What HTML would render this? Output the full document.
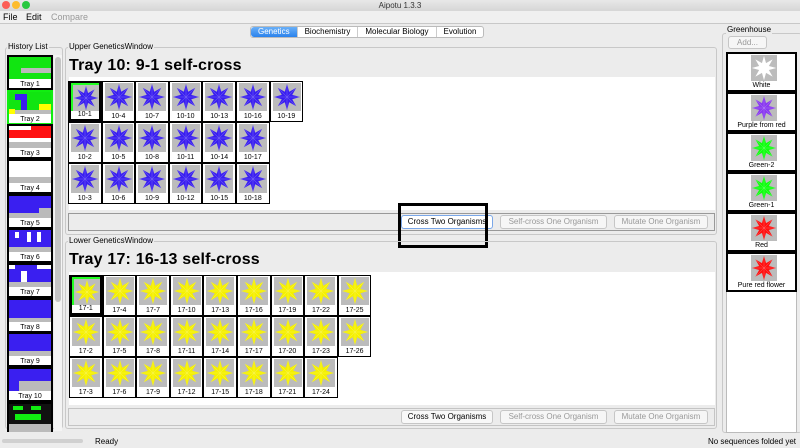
<!DOCTYPE html>
<html><head><meta charset="utf-8"><style>
*{box-sizing:border-box;margin:0;padding:0}
body{width:800px;height:448px;overflow:hidden;background:#ececec;font-family:"Liberation Sans",sans-serif;position:relative;font-size:9px;color:#000}
.abs{position:absolute}
.title{left:0;top:0;width:800px;height:11px;background:linear-gradient(#e8e8e8,#d6d6d6);text-align:center;font-size:8px;line-height:11px;color:#333}
.dot{position:absolute;top:1px;width:8px;height:8px;border-radius:50%}
.menu{left:0;top:11px;width:800px;height:13px;background:#f0f0f0;border-bottom:1px solid #c8c8c8;font-size:9px;line-height:13px}
.menu span{position:absolute}
.tabs{top:26px;left:250px;height:12px;display:flex;border:1px solid #bbb;border-radius:3px;background:#fff;font-size:8px;line-height:10px}
.tabs div{padding:0 7px;border-right:1px solid #ccc}
.tabs .on{background:linear-gradient(#6ab0f8,#2a82ec);color:#fff;border-radius:3px 0 0 3px}
.frame{border:1px solid #c8c8c8;border-radius:3px}
.lbl{font-size:8px;background:#ececec;padding:0 1px}
.grid{display:flex;flex-wrap:wrap}
.c{width:33.6px;height:41px;border:1px solid #000;background:#fff;position:relative;margin-right:0}
.c svg{position:absolute;left:2px;top:1px;width:28px;height:28px;background:#bcbcbc}
.c span,.gh span{position:absolute;left:0;right:0;bottom:1px;text-align:center;font-size:7px;color:#000}
.sel{border:3px solid #000}
.sel svg{left:0;top:-1px;border-top:2px solid #2f2;border-left:2px solid #2f2}
.btn{position:absolute;height:14px;border:1px solid #c6c6c6;border-radius:3px;background:#f6f6f6;font-size:8px;line-height:12px;text-align:center;color:#999}
.btn.a{color:#000;border-color:#7aa7e8;background:#fff}
.hi{position:absolute;left:7px;width:46px;height:35px;border:2px solid #000;background:#fff}
.hi .im{position:absolute;left:0;top:0;width:42px;height:22px;background:#fff;overflow:hidden}
.hi span{position:absolute;left:0;right:0;bottom:0;text-align:center;font-size:7px}
.gh{position:absolute;left:726px;width:71px;height:40px;border:2px solid #000;background:#fff}
.gh svg{position:absolute;left:23px;top:1px;width:26px;height:26px;background:#bcbcbc}
.b{color:#3a1ff0}.y{color:#f5f000}
.h{font-size:16px;font-weight:bold;letter-spacing:0.2px}
</style></head><body>
<svg width="0" height="0" style="position:absolute"><defs><symbol id="f" viewBox="0 0 32 32"><polygon fill="currentColor" points="31,16 22,18.5 26.6,26.6 18.5,22 16,31 13.5,22 5.4,26.6 10,18.5 1,16 10,13.5 5.4,5.4 13.5,10 16,1 18.5,10 26.6,5.4 22,13.5"/><path d="M16 2V30M2 16H30M6 6L26 26M26 6L6 26" stroke="#fff" stroke-opacity=".3" stroke-width=".6"/></symbol></defs></svg>

<div class="abs title">Aipotu 1.3.3
<div class="dot" style="left:2px;background:#fc5f57"></div><div class="dot" style="left:12px;background:#fdbc2e"></div><div class="dot" style="left:22px;background:#28c840"></div></div>
<div class="abs menu"><span style="left:3px">File</span><span style="left:26px">Edit</span><span style="left:51px;color:#999">Compare</span></div>
<div class="abs tabs"><div class="on">Genetics</div><div>Biochemistry</div><div>Molecular Biology</div><div style="border:0">Evolution</div></div>

<!-- History -->
<div class="abs frame" style="left:5px;top:47px;width:58px;height:382px"></div>
<div class="abs lbl" style="left:7px;top:42px">History List</div>
<div class="abs" style="left:54px;top:55px;width:8px;height:376px;background:#f4f4f4"><div style="margin:2px 1px;height:245px;border-radius:3px;background:#c4c4c4"></div></div>
<div class="hi" style="top:55px"><div class="im" style="background:#11e511"><div class="abs" style="left:12px;top:11px;width:30px;height:5px;background:#bbb"></div></div><span>Tray 1</span></div>
<div class="hi" style="top:90px;border-color:#1e1"><div class="im" style="background:#11e511"><div class="abs" style="left:6px;top:2px;width:12px;height:6px;background:#3a1ff0"></div><div class="abs" style="left:12px;top:6px;width:6px;height:12px;background:#3a1ff0"></div><div class="abs" style="left:30px;top:12px;width:12px;height:6px;background:#ff0"></div><div class="abs" style="left:0;top:17px;width:6px;height:5px;background:#ff0"></div><div class="abs" style="left:6px;top:18px;width:36px;height:4px;background:#bbb"></div></div><span>Tray 2</span></div>
<div class="hi" style="top:124px"><div class="im"><div class="abs" style="left:0;top:4px;width:42px;height:8px;background:#f11"></div><div class="abs" style="left:22px;top:0;width:20px;height:6px;background:#f11"></div><div class="abs" style="left:0;top:16px;width:42px;height:6px;background:#bbb"></div></div><span>Tray 3</span></div>
<div class="hi" style="top:159px"><div class="im"><div class="abs" style="left:0;top:16px;width:42px;height:6px;background:#bbb"></div></div><span>Tray 4</span></div>
<div class="hi" style="top:194px"><div class="im" style="background:#3a1ff0"><div class="abs" style="left:30px;top:12px;width:12px;height:10px;background:#bbb"></div><div class="abs" style="left:0;top:17px;width:42px;height:5px;background:#bbb"></div></div><span>Tray 5</span></div>
<div class="hi" style="top:228px"><div class="im" style="background:#3a1ff0"><div class="abs" style="left:6px;top:2px;width:4px;height:6px;background:#fff"></div><div class="abs" style="left:18px;top:2px;width:4px;height:10px;background:#fff"></div><div class="abs" style="left:28px;top:2px;width:4px;height:10px;background:#fff"></div><div class="abs" style="left:0;top:17px;width:42px;height:5px;background:#bbb"></div></div><span>Tray 6</span></div>
<div class="hi" style="top:263px"><div class="im" style="background:#3a1ff0"><div class="abs" style="left:0;top:0;width:6px;height:4px;background:#fff"></div><div class="abs" style="left:12px;top:6px;width:6px;height:12px;background:#fff"></div><div class="abs" style="left:28px;top:0;width:14px;height:4px;background:#fff"></div><div class="abs" style="left:0;top:17px;width:42px;height:5px;background:#bbb"></div></div><span>Tray 7</span></div>
<div class="hi" style="top:298px"><div class="im" style="background:#3a1ff0"><div class="abs" style="left:0;top:18px;width:42px;height:4px;background:#bbb"></div></div><span>Tray 8</span></div>
<div class="hi" style="top:332px"><div class="im" style="background:#3a1ff0"><div class="abs" style="left:0;top:17px;width:42px;height:5px;background:#bbb"></div></div><span>Tray 9</span></div>
<div class="hi" style="top:367px"><div class="im" style="background:#3a1ff0"><div class="abs" style="left:10px;top:12px;width:32px;height:10px;background:#bbb"></div></div><span>Tray 10</span></div>
<div class="hi" style="top:402px;height:30px;border-bottom:0"><div class="im" style="background:#111;height:20px"><div class="abs" style="left:4px;top:2px;width:10px;height:4px;background:#1e1"></div><div class="abs" style="left:22px;top:2px;width:10px;height:4px;background:#1e1"></div><div class="abs" style="left:6px;top:10px;width:26px;height:6px;background:#1e1"></div></div><div class="abs" style="left:0;top:20px;width:42px;height:8px;background:#bbb"></div></div>

<!-- Upper -->
<div class="abs frame" style="left:65px;top:47px;width:652px;height:188px"></div>
<div class="abs lbl" style="left:68px;top:42px">Upper GeneticsWindow</div>
<div class="abs" style="left:69px;top:77px;width:646px;height:133px;background:#fff"></div>
<div class="abs h" style="left:69px;top:57px">Tray 10: 9-1 self-cross</div>
<div class="abs grid b" style="left:68px;top:81px;width:236px">
<div class="c sel"><svg><use href="#f"/></svg><span>10-1</span></div><div class="c"><svg><use href="#f"/></svg><span>10-4</span></div><div class="c"><svg><use href="#f"/></svg><span>10-7</span></div><div class="c"><svg><use href="#f"/></svg><span>10-10</span></div><div class="c"><svg><use href="#f"/></svg><span>10-13</span></div><div class="c"><svg><use href="#f"/></svg><span>10-16</span></div><div class="c"><svg><use href="#f"/></svg><span>10-19</span></div>
<div class="c"><svg><use href="#f"/></svg><span>10-2</span></div><div class="c"><svg><use href="#f"/></svg><span>10-5</span></div><div class="c"><svg><use href="#f"/></svg><span>10-8</span></div><div class="c"><svg><use href="#f"/></svg><span>10-11</span></div><div class="c"><svg><use href="#f"/></svg><span>10-14</span></div><div class="c"><svg><use href="#f"/></svg><span>10-17</span></div>
</div>
<div class="abs grid b" style="left:68px;top:163px;width:236px">
<div class="c"><svg><use href="#f"/></svg><span>10-3</span></div><div class="c"><svg><use href="#f"/></svg><span>10-6</span></div><div class="c"><svg><use href="#f"/></svg><span>10-9</span></div><div class="c"><svg><use href="#f"/></svg><span>10-12</span></div><div class="c"><svg><use href="#f"/></svg><span>10-15</span></div><div class="c"><svg><use href="#f"/></svg><span>10-18</span></div>
</div>
<div class="abs" style="left:68px;top:213px;width:647px;height:18px;border:1px solid #999;background:#ececec"></div>
<div class="btn a" style="left:401px;top:215px;width:92px">Cross Two Organisms</div>
<div class="btn" style="left:500px;top:215px;width:107px">Self-cross One Organism</div>
<div class="btn" style="left:614px;top:215px;width:94px">Mutate One Organism</div>
<div class="abs" style="left:398px;top:203px;width:90px;height:45px;border:3px solid #000"></div>

<!-- Lower -->
<div class="abs frame" style="left:65px;top:241px;width:652px;height:188px"></div>
<div class="abs lbl" style="left:68px;top:236px">Lower GeneticsWindow</div>
<div class="abs" style="left:69px;top:272px;width:646px;height:133px;background:#fff"></div>
<div class="abs h" style="left:69px;top:251px">Tray 17: 16-13 self-cross</div>
<div class="abs grid y" style="left:69px;top:275px;width:303px">
<div class="c sel"><svg><use href="#f"/></svg><span>17-1</span></div><div class="c"><svg><use href="#f"/></svg><span>17-4</span></div><div class="c"><svg><use href="#f"/></svg><span>17-7</span></div><div class="c"><svg><use href="#f"/></svg><span>17-10</span></div><div class="c"><svg><use href="#f"/></svg><span>17-13</span></div><div class="c"><svg><use href="#f"/></svg><span>17-16</span></div><div class="c"><svg><use href="#f"/></svg><span>17-19</span></div><div class="c"><svg><use href="#f"/></svg><span>17-22</span></div><div class="c"><svg><use href="#f"/></svg><span>17-25</span></div>
<div class="c"><svg><use href="#f"/></svg><span>17-2</span></div><div class="c"><svg><use href="#f"/></svg><span>17-5</span></div><div class="c"><svg><use href="#f"/></svg><span>17-8</span></div><div class="c"><svg><use href="#f"/></svg><span>17-11</span></div><div class="c"><svg><use href="#f"/></svg><span>17-14</span></div><div class="c"><svg><use href="#f"/></svg><span>17-17</span></div><div class="c"><svg><use href="#f"/></svg><span>17-20</span></div><div class="c"><svg><use href="#f"/></svg><span>17-23</span></div><div class="c"><svg><use href="#f"/></svg><span>17-26</span></div>
<div class="c"><svg><use href="#f"/></svg><span>17-3</span></div><div class="c"><svg><use href="#f"/></svg><span>17-6</span></div><div class="c"><svg><use href="#f"/></svg><span>17-9</span></div><div class="c"><svg><use href="#f"/></svg><span>17-12</span></div><div class="c"><svg><use href="#f"/></svg><span>17-15</span></div><div class="c"><svg><use href="#f"/></svg><span>17-18</span></div><div class="c"><svg><use href="#f"/></svg><span>17-21</span></div><div class="c"><svg><use href="#f"/></svg><span>17-24</span></div>
</div>
<div class="abs" style="left:68px;top:408px;width:647px;height:18px;border:1px solid #c4c4c4;background:#ececec"></div>
<div class="btn a" style="left:401px;top:410px;width:92px;border-color:#c6c6c6;background:#f8f8f8">Cross Two Organisms</div>
<div class="btn" style="left:500px;top:410px;width:107px">Self-cross One Organism</div>
<div class="btn" style="left:614px;top:410px;width:94px">Mutate One Organism</div>

<!-- Greenhouse -->
<div class="abs frame" style="left:722px;top:33px;width:80px;height:400px"></div>
<div class="abs lbl" style="left:726px;top:25px">Greenhouse</div>
<div class="btn" style="left:728px;top:36px;width:39px;height:13px;line-height:11px">Add...</div>
<div class="abs" style="left:726px;top:52px;width:71px;height:381px;background:#fff;border:1px solid #bbb"></div>
<div class="gh" style="top:52px;color:#fff"><svg><use href="#f"/></svg><span>White</span></div>
<div class="gh" style="top:92px;color:#8a3af0"><svg><use href="#f"/></svg><span>Purple from red</span></div>
<div class="gh" style="top:132px;color:#1f1"><svg><use href="#f"/></svg><span>Green-2</span></div>
<div class="gh" style="top:172px;color:#1f1"><svg><use href="#f"/></svg><span>Green-1</span></div>
<div class="gh" style="top:212px;color:#f11"><svg><use href="#f"/></svg><span>Red</span></div>
<div class="gh" style="top:252px;color:#f11"><svg><use href="#f"/></svg><span>Pure red flower</span></div>

<!-- status -->
<div class="abs" style="left:2px;top:439px;width:81px;height:4px;border-radius:2px;background:#d0d0d0"></div>
<div class="abs" style="left:95px;top:437px;font-size:8px">Ready</div>
<div class="abs" style="right:4px;top:437px;font-size:8px">No sequences folded yet</div>
</body></html>
